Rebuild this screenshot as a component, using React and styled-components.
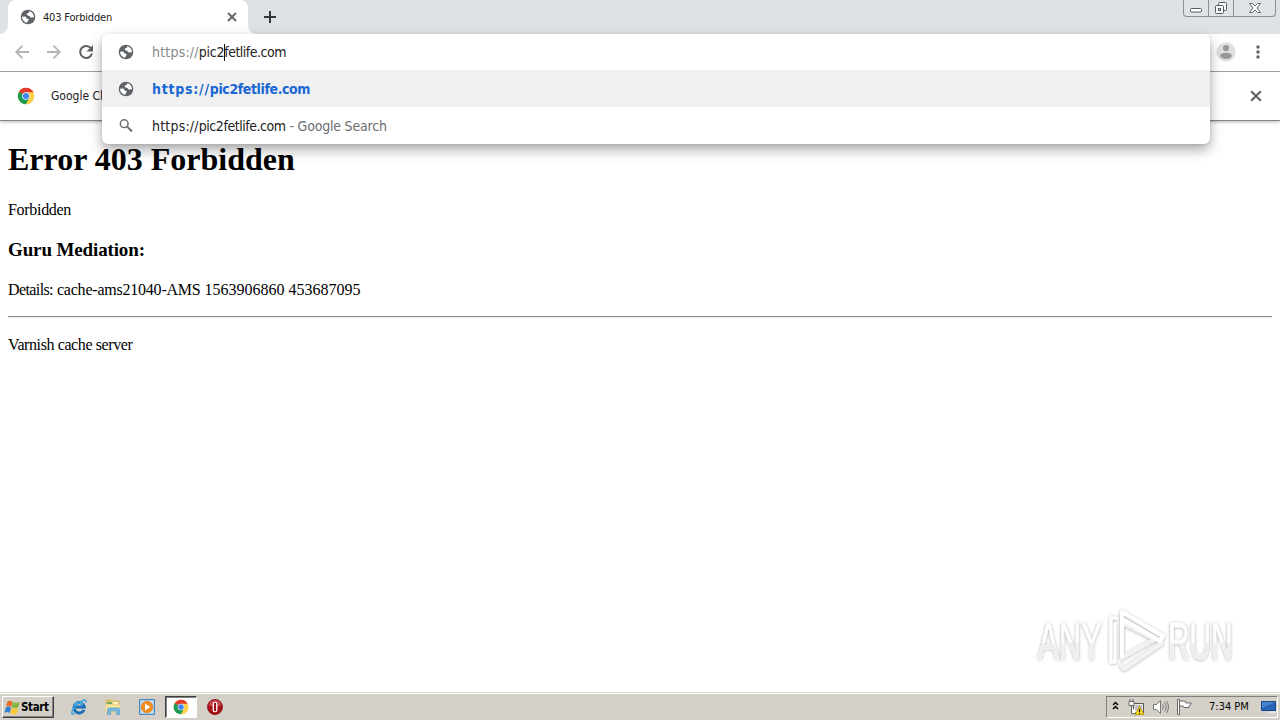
import React from "react";
import styled, { createGlobalStyle } from "styled-components";

const Global = createGlobalStyle`
  * { box-sizing: border-box; }
  html, body { margin: 0; padding: 0; width: 1280px; height: 720px; overflow: hidden; background: #fff; }
  svg { display: block; flex: none; }
`;
const ui = `"DejaVu Sans Condensed", "DejaVu Sans", sans-serif`;

const Screen = styled.div`
  width: 1280px; height: 720px; display: flex; flex-direction: column;
  position: relative; background: #fff; color: #000; overflow: hidden;
`;
const Label = styled.span`
  font-family: ${ui};
  font-stretch: condensed;
  font-size: ${p => p.$size || 11}px;
  font-weight: ${p => (p.$bold ? 700 : 400)};
  letter-spacing: ${p => p.$track || 0}px;
  color: ${p => p.$color || "#222"};
  white-space: pre;
  line-height: 18px;
`;
const TabStrip = styled.div`
  height: 34px; background: #dee1e6; display: flex; align-items: flex-start; padding-left: 8px; flex: none;
`;
const Tab = styled.div`
  width: 240px; height: 34px; background: #fff; border-radius: 8px 8px 0 0;
  display: flex; align-items: center; padding: 0 11px 0 12px; position: relative;
  &::before, &::after {
    content: ""; position: absolute; bottom: 0; width: 8px; height: 8px;
  }
  &::before { left: -8px; background: radial-gradient(circle at 0 0, transparent 7.5px, #fff 8px); }
  &::after { right: -8px; background: radial-gradient(circle at 100% 0, transparent 7.5px, #fff 8px); }
`;
const TabTitle = styled.div`flex: 1; padding: 2px 0 0 7px; display: flex;`;
const NewTab = styled.div`margin: 11px 0 0 16px;`;
const WindowButtons = styled.div`
  margin-left: auto; margin-right: 4px; width: 93px; height: 17px; display: flex;
  border: 1px solid #8b9098; border-top: 0; border-radius: 0 0 4px 4px; background: #e0e3e8;
`;
const WindowButton = styled.div`
  width: ${p => p.$w}px; display: flex; justify-content: center; padding-top: ${p => p.$top}px;
  & + & { border-left: 1px solid #8b9098; }
`;
const Toolbar = styled.div`
  height: 38px; flex: none; border-bottom: 1px solid #a9a9a9; display: flex; align-items: center;
  padding: 0 16px 1px 14px; gap: 16px;
`;
const ToolbarEnd = styled.div`margin-left: auto; display: flex; gap: 16px; align-items: center;`;
const InfoBar = styled.div`
  height: 49px; flex: none; border-bottom: 1px solid #858585; box-shadow: 0 1px 3px rgba(0,0,0,.28);
  display: flex; align-items: center; padding: 0 18px 0 17px; gap: 16px;
`;
const InfoClose = styled.div`margin-left: auto;`;
const Suggestions = styled.div`
  position: absolute; left: 102px; top: 34px; width: 1108px; height: 110px; background: #fff;
  border-radius: 6px; box-shadow: 0 6px 13px rgba(0,0,0,.32), 0 1px 4px rgba(0,0,0,.1);
  display: flex; flex-direction: column; overflow: visible;
`;
const Suggestion = styled.div`
  height: ${p => p.$h}px; display: flex; align-items: center; padding: 0 0 0 16px;
  background: ${p => (p.$active ? "#f0f0f0" : "transparent")};
`;
const SuggestionIcon = styled.div`width: 34px; flex: none;`;
const Line = styled.div`display: flex; align-items: center;`;
const Caret = styled.i`width: 1px; height: 17px; background: #111; margin: 0 -1px 0 0;`;

const Page = styled.main`
  flex: 1; padding: 0 8px; font-family: "Liberation Serif", "Times New Roman", serif; font-size: 16px; line-height: 18px;
  h1 { font-size: 32px; line-height: 36px; margin: 20px 0 24px; }
  h3 { font-size: 19px; line-height: 22px; margin: 20px 0; letter-spacing: -0.13px; }
  p { margin: 0; }
  hr { margin: 17px 0 18px; border: 0; height: 2px; border-top: 1px solid #888; border-bottom: 1px solid #eee; }
`;
const Run = styled.span`letter-spacing: ${p => p.$track}px;`;
const Watermark = styled.div`position: absolute; left: 1028px; top: 600px;`;

const Taskbar = styled.footer`
  height: 28px; flex: none; background: #d4d0c8; border-top: 1px solid #d8d5ce; box-shadow: inset 0 1px #fff;
  display: flex; align-items: center; padding: 3px 2px 2px 2px;
`;
const StartButton = styled.div`
  width: 52px; height: 22px; border: 1px solid; border-color: #fff #404040 #404040 #fff;
  box-shadow: inset -1px -1px #808080; display: flex; align-items: center; padding-left: 1px;
`;
const TaskButton = styled.div`
  width: 34px; height: 22px; display: flex; align-items: center; justify-content: center;
  ${p => p.$active && `width: 32px; margin: 0 1px; background: #fff; border: 1px solid; border-color: #404040 #fff #fff #404040; box-shadow: inset 1px 1px #808080;`}
`;
const TaskButtons = styled.div`display: flex; margin-left: 8px;`;
const Tray = styled.div`
  margin-left: auto; width: 172px; height: 22px; border: 1px solid; border-color: #808080 #fff #fff #808080;
  display: flex; align-items: center; padding-left: 5px;
`;
const TraySlot = styled.div`width: ${p => p.$w}px; display: flex; align-items: center;`;

const Globe = ({ s = 16 }) => (
  <svg width={s} height={s} viewBox="1 1 22 22">
    <circle cx="12" cy="12" r="10" fill="#5f6368" />
    <path fill="#fff" d="M3.800 11.500 7 11.300c1.600-.1 2.500.8 2.700 2 .2.900.9 1.200 2.200 1.200 1.500.1 1.400 1.200.4 2.300-.8.8-.9 1.700-1 3-4.200-.5-7.500-4-7.500-8.300zM13.500 4c.3 1.500-.2 2.300-1.600 2.600-1.300.2-1.600.9-1.600 2 0 1.300 1 1.700 2.200 1.600 1.700 0 2 .8 2.500 1.800.6 1 1.600 1 2.600.6 1-.4 1.900-.2 2.600.2.400-4.400-2.400-7.900-6.700-8.800z" />
  </svg>
);
const Cross = ({ s = 10, w = 1.8 }) => (
  <svg width={s} height={s} viewBox="0 0 10 10"><path d="M1 1l8 8M9 1L1 9" stroke="#5f6368" strokeWidth={w} /></svg>
);
const Arrow = ({ flip }) => (
  <svg width="16" height="16" viewBox="0 0 16 16">
    <path transform={flip ? "translate(16 0) scale(-1 1)" : undefined} d="M15 8H2.500M8.500 1.700 2.200 8l6.300 6.300" fill="none" stroke="#b3b5b7" strokeWidth="1.8" />
  </svg>
);
const Reload = () => (
  <svg width="16" height="16" viewBox="0 0 16 16">
    <path d="M13.300 4.800A6 6 0 1 0 14 9.500" fill="none" stroke="#5f6368" strokeWidth="2" /><path d="M15 1v6.500H8.500z" fill="#5f6368" />
  </svg>
);
const Chrome = ({ s = 18 }) => (
  <svg width={s} height={s} viewBox="0 0 48 48">
    <circle cx="24" cy="24" r="22" fill="#fbd04b" />
    <path d="M24 24 4.950 13A22 22 0 0 1 43.600 14z" fill="#e33b2e" />
    <path d="M4.950 13A22 22 0 0 0 24 46l9.500-16.500L24 24z" fill="#1b9b54" />
    <path d="M24 14h19.600A22 22 0 0 1 24 46l9-17z" fill="#fbd04b" />
    <circle cx="24" cy="24" r="10" fill="#fff" /><circle cx="24" cy="24" r="8.200" fill="#4285f4" />
  </svg>
);
const Search = () => (
  <svg width="16" height="16" viewBox="0 0 16 16">
    <circle cx="6.200" cy="5.700" r="3.900" fill="none" stroke="#6b6e72" strokeWidth="1.500" /><path d="m9 8.500 5 5" stroke="#6b6e72" strokeWidth="1.900" />
  </svg>
);
const Avatar = () => (
  <svg width="20" height="20" viewBox="0 0 20 20">
    <circle cx="10" cy="10" r="9.700" fill="#dedfe0" /><circle cx="10" cy="6" r="3.100" fill="#97999b" /><ellipse cx="10" cy="13.800" rx="5.800" ry="3.100" fill="#97999b" />
  </svg>
);
const Dots = () => (
  <svg width="12" height="16" viewBox="0 0 12 16" fill="#5f6368">
    <circle cx="6" cy="3" r="1.700" /><circle cx="6" cy="8" r="1.700" /><circle cx="6" cy="13" r="1.700" />
  </svg>
);
const WindowsFlag = () => (
  <svg width="17" height="17" viewBox="0 0 17 17">
    <path d="M3.500 2.500Q6 .8 8.500 2.500L7.300 7.700Q5 6.200 2.200 7.500z" fill="#ed6a25" />
    <path d="M8.900 2.800Q12 4.600 15.800 2.800L14.400 8.200Q11 9.700 7.800 8z" fill="#83b93f" />
    <path d="M2 8.200Q5 6.800 7.100 8.400L5.800 14Q3.300 12.300.3 13.700z" fill="#3482cf" />
    <path d="M7.700 8.800Q11 10.400 14.200 9L12.700 14.700Q9.500 16.200 6.300 14.300z" fill="#fac832" />
  </svg>
);
const Explorer = () => (
  <svg width="18" height="18" viewBox="0 0 18 18">
    <path d="M14 11.800A5.200 5.200 0 1 1 14.300 8.900H5.500" fill="none" stroke="#176fb8" strokeWidth="3" />
    <path d="M4.500 7.700A5 5 0 0 1 13 6.500" fill="none" stroke="#59c3ee" strokeWidth="1.300" />
    <path d="M4.500 15.500Q.5 17 2.300 12.800 6 5.800 12 2.900 17 .6 15.700 4.800" fill="none" stroke="#38a5df" strokeWidth="1.500" />
  </svg>
);
const Folder = () => (
  <svg width="18" height="18" viewBox="0 0 18 18">
    <path d="M2 2h5l1 1h7v11H2z" fill="#e9c864" stroke="#c9a74f" strokeWidth=".6" />
    <path d="M3 4h5v2H3z" fill="#6dab66" /><path d="M9 4h5v2H9z" fill="#fff3c5" />
    <path d="M1.500 6.500h14v8h-14z" fill="#f7e6a1" />
    <path d="M3.500 16.500v-5Q3.500 10 5 10h9q1.500 0 1.500 1.500v5h-3V13h-6v3.500z" fill="#75bde3" stroke="#4892c0" strokeWidth=".6" />
  </svg>
);
const Player = () => (
  <svg width="18" height="18" viewBox="0 0 18 18">
    <path d="M1.500 1.500h15v15h-15z" fill="#a7cae8" stroke="#4c88bd" /><path d="M3 3h12v12H3z" fill="#c9dff0" />
    <circle cx="9" cy="9" r="5.800" fill="#f58c18" stroke="#dc7710" strokeWidth=".6" /><path d="m7 5.600 5.400 3.400L7 12.400z" fill="#fff" />
  </svg>
);
const Opera = () => (
  <svg width="18" height="18" viewBox="0 0 18 18">
    <circle cx="9" cy="9" r="7.700" fill="#a91118" /><path d="M2 7A7.300 7.300 0 0 1 16 7Q9 10 2 7" fill="#df7375" opacity=".55" />
    <circle cx="9" cy="9" r="7.400" fill="none" stroke="#790b12" strokeWidth=".8" />
    <rect x="6.600" y="3.800" width="4.800" height="10.400" rx="2.200" fill="#fff" /><rect x="7.900" y="4.800" width="2.200" height="8.400" rx="1" fill="#991018" />
  </svg>
);
const Chevrons = () => (
  <svg width="7" height="12" viewBox="0 0 7 12"><path d="m1 4 2.500-2.500L6 4M1 8 3.500 5.500 6 8" fill="none" stroke="#000" strokeWidth="1.500" /></svg>
);
const Network = () => (
  <svg width="17" height="17" viewBox="0 0 17 17">
    <path d="M5.500 4.500h10v9h-10z" fill="#e9e9e7" stroke="#555" /><path d="M7 6h7v5H7z" fill="#c1c2c1" />
    <path d="M1 2.500h5v4H1zM2 0v3M5 0v3M3.500 7v7.500H8" fill="#fff" stroke="#666" />
    <path d="m11.500 7.500 4.500 8H7z" fill="#ffdc24" stroke="#b58c00" strokeWidth=".8" /><path d="M11.500 10v3M11.500 13.700v1" stroke="#111" strokeWidth="1.200" />
  </svg>
);
const Speaker = () => (
  <svg width="18" height="16" viewBox="0 0 18 16">
    <path d="M1.500 5.500h3l4-4v13l-4-4h-3z" fill="#fff" stroke="#777" /><path d="M10.500 5.500q2 2.500 0 5M12.500 3.500q3.500 4.500 0 9M14.500 2q4 6 0 12" fill="none" stroke="#777" />
  </svg>
);
const Flag = () => (
  <svg width="17" height="16" viewBox="0 0 17 16"><path d="M1.500.5h2v15h-2zM3.500 2h5.500l1 2h5.500l-2.500 3.500v1H8l-1-1.500H3.500z" fill="#fff" stroke="#666" /></svg>
);
const Desktop = () => (
  <svg width="17" height="14" viewBox="0 0 17 14">
    <path d="M1.500 1.500h14v9h-14z" fill="#2463b5" stroke="#17488b" /><path d="M2 2h13L2 8z" fill="#4b83cf" /><path d="M8 12.500h8M12 11v2" stroke="#dce8f4" strokeWidth="1.500" />
  </svg>
);
const AnyRun = () => (
  <svg width="250" height="80" viewBox="0 0 250 80">
    <defs>
      <filter id="soft" x="-10%" y="-20%" width="120%" height="140%"><feDropShadow dx="0" dy="0.5" stdDeviation="1.800" floodColor="#000" floodOpacity=".36" /></filter>
      <linearGradient id="fade" x1="0" y1="0" x2="0" y2="1"><stop offset=".52" stopColor="#fff" /><stop offset=".53" stopColor="#ededed" /></linearGradient>
    </defs>
    <g filter="url(#soft)">
      <g fill="url(#fade)" stroke="#f8f8f8" strokeWidth=".7" fontFamily="'Liberation Sans', sans-serif" fontSize="51">
        <text transform="translate(10 59) scale(.61 1)">ANY</text>
        <text transform="translate(140 59) scale(.585 1)">RUN</text>
      </g>
      <g fill="none" stroke="#fff" strokeWidth="4" strokeLinejoin="round" strokeLinecap="round">
        <path d="M89 18h-6v44h4V24" strokeWidth="3" />
        <path d="m94 58 5-3 28-16-33-16M134 43 96 69l-3-4" stroke="#f2f2f2" />
        <path d="M94 56V12l41 24-3 5-38-22" />
      </g>
    </g>
  </svg>
);

export default function App() {
  return (
    <Screen>
      <Global />
      <TabStrip>
        <Tab>
          <Globe /><TabTitle><Label $track={-0.18}>403 Forbidden</Label></TabTitle><Cross />
        </Tab>
        <NewTab><svg width="12" height="12" viewBox="0 0 12 12"><path d="M6 0v12M0 6h12" stroke="#33363b" strokeWidth="2" /></svg></NewTab>
        <WindowButtons>
          <WindowButton $w={24} $top={7}><svg width="12" height="6" viewBox="0 0 12 6"><rect x=".5" y="1.500" width="11" height="3.500" rx="1" fill="#fff" stroke="#555a66" /></svg></WindowButton>
          <WindowButton $w={25} $top={1}><svg width="14" height="14" viewBox="0 0 14 14" fill="#f7f7f7" stroke="#555a66"><rect x="4.500" y="1.500" width="8" height="8" rx="1" /><rect x="1.500" y="4.500" width="8" height="8" rx="1" /><rect x="4.500" y="7.500" width="2" height="2" /></svg></WindowButton>
          <WindowButton $w={42} $top={3}><svg width="12" height="10" viewBox="0 0 12 10"><path d="M.5.5h3L6 3 8.500.5h3L8 5l3.500 4.500h-3L6 7 3.500 9.500h-3L4 5z" fill="#fff" stroke="#555a66" strokeWidth=".9" /></svg></WindowButton>
        </WindowButtons>
      </TabStrip>
      <Toolbar>
        <Arrow /><Arrow flip /><Reload />
        <ToolbarEnd><Avatar /><Dots /></ToolbarEnd>
      </Toolbar>
      <InfoBar>
        <Chrome /><Label $size={12}>Google Ch</Label><InfoClose><Cross s={12} w={1.7} /></InfoClose>
      </InfoBar>
      <Page>
        <h1>Error 403 Forbidden</h1>
        <p><Run $track={-0.3}>Forbidden</Run></p>
        <h3>Guru Mediation:</h3>
        <p><Run $track={-0.6}>Details:</Run> <Run $track={-0.22}>cache-ams21040-AMS</Run> 1563906860 453687095</p>
        <hr />
        <p><Run $track={-0.4}>Varnish cache server</Run></p>
      </Page>
      <Taskbar>
        <StartButton><WindowsFlag /><Label $bold $size={11.5} $track={-0.35} $color="#000">Start</Label></StartButton>
        <TaskButtons>
          <TaskButton><Explorer /></TaskButton><TaskButton><Folder /></TaskButton><TaskButton><Player /></TaskButton>
          <TaskButton $active><Chrome s={16} /></TaskButton><TaskButton><Opera /></TaskButton>
        </TaskButtons>
        <Tray>
          <TraySlot $w={16}><Chevrons /></TraySlot><TraySlot $w={24}><Network /></TraySlot><TraySlot $w={24}><Speaker /></TraySlot>
          <TraySlot $w={33}><Flag /></TraySlot><TraySlot $w={51}><Label $color="#000">7:34 PM</Label></TraySlot><Desktop />
        </Tray>
      </Taskbar>
      <Suggestions>
        <Suggestion $h={36}><SuggestionIcon><Globe /></SuggestionIcon><Line><Label $size={14} $track={0.2} $color="#85888c">https://</Label><Label $size={14} $track={-0.25}>pic2</Label><Caret /><Label $size={14} $track={-0.5}>fetlife.com</Label></Line></Suggestion>
        <Suggestion $h={37} $active><SuggestionIcon><Globe /></SuggestionIcon><Line><Label $size={14} $bold $track={0.75} $color="#1967d2">https://</Label><Label $size={14} $bold $track={-0.4} $color="#1967d2">pic2fetlife.com</Label></Line></Suggestion>
        <Suggestion $h={37}><SuggestionIcon><Search /></SuggestionIcon><Line><Label $size={14} $track={0.2}>https://</Label><Label $size={14} $track={-0.45}>pic2fetlife.com</Label><Label $size={14} $track={-0.2} $color="#6b6e72"> - Google Search</Label></Line></Suggestion>
      </Suggestions>
      <Watermark><AnyRun /></Watermark>
    </Screen>
  );
}
